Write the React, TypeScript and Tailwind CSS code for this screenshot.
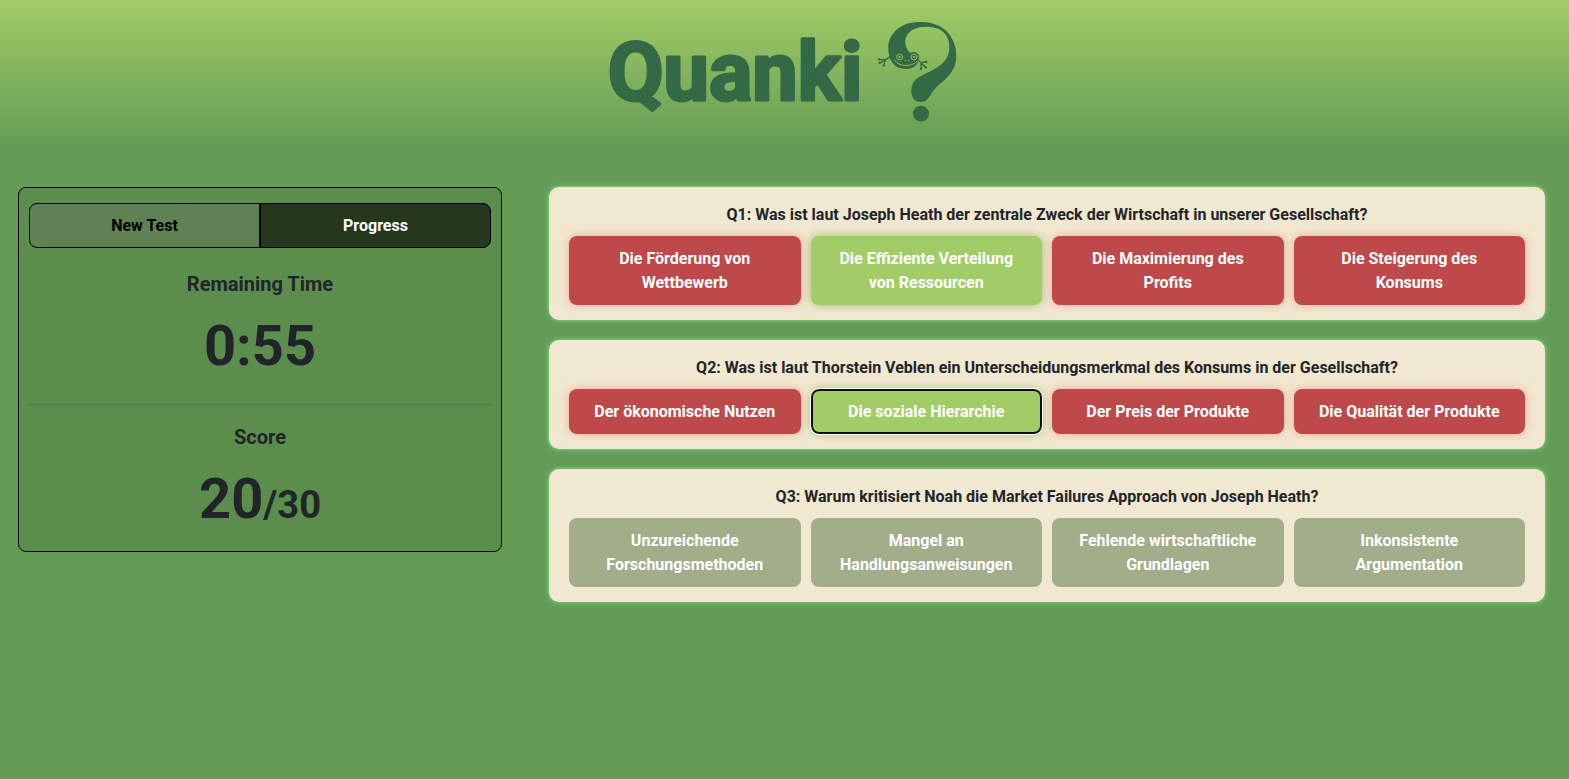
type AnswerState = "wrong" | "right" | "open";

interface Answer {
  text: string;
  state: AnswerState;
  focused?: boolean;
}

interface Question {
  title: string;
  answers: Answer[];
}

const questions: Question[] = [
  {
    title: "Q1: Was ist laut Joseph Heath der zentrale Zweck der Wirtschaft in unserer Gesellschaft?",
    answers: [
      { text: "Die Förderung von Wettbewerb", state: "wrong" },
      { text: "Die Effiziente Verteilung von Ressourcen", state: "right" },
      { text: "Die Maximierung des Profits", state: "wrong" },
      { text: "Die Steigerung des Konsums", state: "wrong" },
    ],
  },
  {
    title: "Q2: Was ist laut Thorstein Veblen ein Unterscheidungsmerkmal des Konsums in der Gesellschaft?",
    answers: [
      { text: "Der ökonomische Nutzen", state: "wrong" },
      { text: "Die soziale Hierarchie", state: "right", focused: true },
      { text: "Der Preis der Produkte", state: "wrong" },
      { text: "Die Qualität der Produkte", state: "wrong" },
    ],
  },
  {
    title: "Q3: Warum kritisiert Noah die Market Failures Approach von Joseph Heath?",
    answers: [
      { text: "Unzureichende Forschungsmethoden", state: "open" },
      { text: "Mangel an Handlungsanweisungen", state: "open" },
      { text: "Fehlende wirtschaftliche Grundlagen", state: "open" },
      { text: "Inkonsistente Argumentation", state: "open" },
    ],
  },
];

const answerStyles: Record<AnswerState, string> = {
  wrong: "bg-[#be494a] shadow-[0_0_10px_rgba(240,128,110,0.6)]",
  right: "bg-[#a2cd66] shadow-[0_0_10px_rgba(120,175,80,0.7)]",
  open: "bg-[#a2ad8a]",
};

function FrogMark() {
  return (
    <svg viewBox="33 33 240 306" className="h-[102px] w-20" fill="#336945" aria-hidden="true">
      <path d="M70 138C62 108 68 82 90 61C112 41 137 35 168 36C204 37 237 51 254 79C270 104 275 137 267 165C259 190 238 208 218 225C205 237 198 248 190 260C184 270 176 276 163 276C146 275 137 262 136 245C135 226 143 211 158 202C176 191 198 184 219 169C240 154 250 136 250 112C250 87 240 69 220 58C204 50 184 48 162 52C135 57 119 73 118 93C117 107 122 119 133 129C141 124 151 126 156 132C161 139 159 146 157 151C155 166 142 176 122 177C98 177 84 168 76 153C72 148 70 143 70 138Z" />
      <circle cx="165" cy="311" r="24" />
      <g fill="none" stroke="#336945" strokeLinecap="round" strokeWidth="4">
        <path d="M72 140L58 150L41 149M58 150L42 159M58 150L53 166M156 150L165 158L181 156M165 158L179 172M165 158L165 177" />
      </g>
      <circle cx="39" cy="148" r="3.5" />
      <circle cx="41" cy="159" r="3.5" />
      <circle cx="53" cy="166" r="3.5" />
      <circle cx="181" cy="156" r="3.5" />
      <circle cx="179" cy="172" r="3.5" />
      <circle cx="165" cy="177" r="3.5" />
      <g fill="none" stroke="#8cbc60" strokeWidth="3" strokeLinecap="round">
        <circle cx="101" cy="141" r="9" />
        <circle cx="144" cy="141" r="9" />
        <path d="M87 152C97 170 139 173 154 153" />
      </g>
      <circle cx="101" cy="141" r="3.5" fill="#8cbc60" />
      <circle cx="144" cy="141" r="3.5" fill="#8cbc60" />
      <circle cx="118" cy="152" r="2" fill="#8cbc60" />
      <circle cx="127" cy="152" r="2" fill="#8cbc60" />
    </svg>
  );
}

function QuestionCard({ question }: { question: Question }) {
  return (
    <section className="rounded-[10px] bg-[#f1e8d1] px-5 pt-4 pb-[15px] shadow-[0_0_5px_#8fe08f]">
      <h2 className="mb-[9px] text-center text-base leading-6 font-bold text-[#212529]">{question.title}</h2>
      <div className="grid grid-cols-4 gap-2.5">
        {question.answers.map((answer) => (
          <button
            key={answer.text}
            type="button"
            className={`flex items-center justify-center rounded-lg px-5 pt-[11px] pb-2.5 text-base leading-6 font-bold text-white ${answerStyles[answer.state]} ${
              answer.focused ? "inset-ring-2 inset-ring-[#101010] outline outline-white" : ""
            }`}
          >
            <span className="max-w-48">{answer.text}</span>
          </button>
        ))}
      </div>
    </section>
  );
}

export default function App() {
  return (
    <div className="min-h-screen bg-[#649c55] font-[Roboto,sans-serif] text-[#212529]">
      <header className="flex h-[147px] justify-center bg-linear-to-b from-[#a2cd66] to-[#649c55] pt-[21px] pr-1">
        <h1 className="flex gap-4">
          <svg viewBox="0 0 252 102" className="h-[102px] w-[252px]" role="img" aria-label="Quanki">
            <text
              x="126"
              y="79"
              textAnchor="middle"
              fontFamily="Roboto, sans-serif"
              fontWeight="700"
              fontSize="81"
              fill="#336945"
              stroke="#336945"
              strokeWidth="3"
              strokeLinejoin="round"
            >
              Quanki
            </text>
          </svg>
          <FrogMark />
        </h1>
      </header>

      <main className="grid grid-cols-[1fr_2fr] items-start pt-10">
        <div className="pr-[21px] pl-[18px]">
          <aside className="rounded-lg border border-black bg-[#5b8d4d] px-2.5 pt-[15px] pb-1 text-center">
            <div className="grid grid-cols-2 text-base leading-6 font-bold">
              <button type="button" className="rounded-l-lg border border-black bg-[#5f8255] pt-2.5 pb-[9px] text-black">
                New Test
              </button>
              <button type="button" className="rounded-r-lg border border-black bg-[#25381e] pt-2.5 pb-[9px] text-white">
                Progress
              </button>
            </div>
            <h2 className="mt-[21px] text-xl leading-[30px] font-bold">Remaining Time</h2>
            <p className="mt-[5px] text-[56px] leading-[84px] font-bold">0:55</p>
            <hr className="mt-4 border-[#4f7848]" />
            <h2 className="mt-[17px] text-xl leading-[30px] font-bold">Score</h2>
            <p className="mt-[5px] text-[56px] leading-[84px] font-bold">
              20<span className="text-[38px]">/30</span>
            </p>
          </aside>
        </div>
        <div className="flex flex-col gap-5 pr-6 pl-[26px]">
          {questions.map((question) => (
            <QuestionCard key={question.title} question={question} />
          ))}
        </div>
      </main>
    </div>
  );
}
